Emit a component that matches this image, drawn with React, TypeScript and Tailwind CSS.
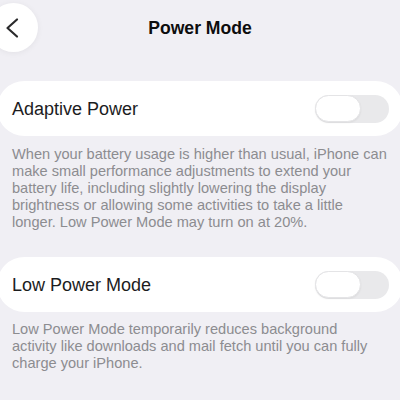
import React from "react";

function Toggle() {
  return (
    <div className="flex h-[28px] w-[74px] items-center rounded-full bg-[#e9e9eb]">
      <div className="h-[27px] w-[46px] rounded-full border border-[#e4e4e6] bg-white shadow-[0_1px_2px_rgba(0,0,0,0.06)]" />
    </div>
  );
}

function SettingRow({ label }: { label: string }) {
  return (
    <div className="mx-[-3px] flex h-[55px] items-center justify-between rounded-[28px] bg-white pl-[15px] pr-[14px]">
      <span className="mt-[2px] text-[18px] text-[#1c1c1e]">{label}</span>
      <Toggle />
    </div>
  );
}

function Footnote({ lines, className }: { lines: string[]; className?: string }) {
  return (
    <p
      className={`whitespace-nowrap pl-[12px] text-[14.6px] leading-[17px] text-[#8c8c90] ${className ?? ""}`}
    >
      {lines.map((line, i) => (
        <React.Fragment key={i}>
          {line}
          {i < lines.length - 1 && <br />}
        </React.Fragment>
      ))}
    </p>
  );
}

export default function App() {
  return (
    <div
      className="h-[400px] w-[400px] overflow-hidden bg-[#f0eff4]"
      style={{ fontFamily: '"Liberation Sans", Arial, sans-serif' }}
    >
      <header className="mt-[3px] grid h-[49px] grid-cols-[1fr_auto_1fr] items-center">
        <div className="flex">
          <button className="ml-[-11px] flex h-[49px] w-[49px] items-center justify-center rounded-full bg-white shadow-[0_1px_6px_rgba(0,0,0,0.06)]">
            <svg width="49" height="49" viewBox="0 0 49 49" fill="none">
              <path
                d="M28 16.5 L18.5 25 L28 33.5"
                stroke="#2a2a2c"
                strokeWidth="2.2"
                strokeLinecap="round"
                strokeLinejoin="round"
              />
            </svg>
          </button>
        </div>
        <h1 className="mt-[1px] text-[17.6px] font-bold text-[#0d0d0d]">Power Mode</h1>
        <div />
      </header>

      <main className="mt-[29px]">
        <SettingRow label="Adaptive Power" />
        <Footnote
          className="mt-[10px]"
          lines={[
            "When your battery usage is higher than usual, iPhone can",
            "make small performance adjustments to extend your",
            "battery life, including slightly lowering the display",
            "brightness or allowing some activities to take a little",
            "longer. Low Power Mode may turn on at 20%.",
          ]}
        />

        <div className="mt-[26px]">
          <SettingRow label="Low Power Mode" />
        </div>
        <Footnote
          className="mt-[9px]"
          lines={[
            "Low Power Mode temporarily reduces background",
            "activity like downloads and mail fetch until you can fully",
            "charge your iPhone.",
          ]}
        />
      </main>
    </div>
  );
}
